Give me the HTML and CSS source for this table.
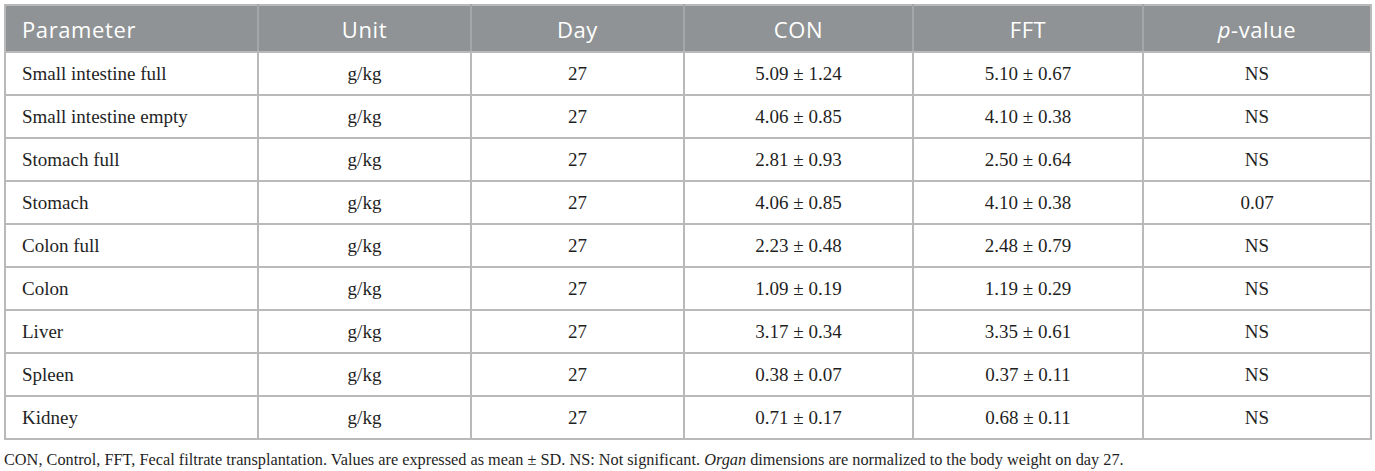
FILE: index.html
```html
<!DOCTYPE html>
<html>
<head>
<meta charset="utf-8">
<link rel="stylesheet" href="styles.css">
</head>
<body>
<div class="wrap">
<table class="data">
<colgroup>
<col class="c1"><col class="c2"><col class="c3"><col class="c4"><col class="c5"><col class="c6">
</colgroup>
<thead>
<tr><th class="left">Parameter</th><th>Unit</th><th>Day</th><th>CON</th><th>FFT</th><th><i>p</i>-value</th></tr>
</thead>
<tbody>
<tr><td class="left">Small intestine full</td><td>g/kg</td><td>27</td><td>5.09 ± 1.24</td><td>5.10 ± 0.67</td><td>NS</td></tr>
<tr><td class="left">Small intestine empty</td><td>g/kg</td><td>27</td><td>4.06 ± 0.85</td><td>4.10 ± 0.38</td><td>NS</td></tr>
<tr><td class="left">Stomach full</td><td>g/kg</td><td>27</td><td>2.81 ± 0.93</td><td>2.50 ± 0.64</td><td>NS</td></tr>
<tr><td class="left">Stomach</td><td>g/kg</td><td>27</td><td>4.06 ± 0.85</td><td>4.10 ± 0.38</td><td>0.07</td></tr>
<tr><td class="left">Colon full</td><td>g/kg</td><td>27</td><td>2.23 ± 0.48</td><td>2.48 ± 0.79</td><td>NS</td></tr>
<tr><td class="left">Colon</td><td>g/kg</td><td>27</td><td>1.09 ± 0.19</td><td>1.19 ± 0.29</td><td>NS</td></tr>
<tr><td class="left">Liver</td><td>g/kg</td><td>27</td><td>3.17 ± 0.34</td><td>3.35 ± 0.61</td><td>NS</td></tr>
<tr><td class="left">Spleen</td><td>g/kg</td><td>27</td><td>0.38 ± 0.07</td><td>0.37 ± 0.11</td><td>NS</td></tr>
<tr><td class="left">Kidney</td><td>g/kg</td><td>27</td><td>0.71 ± 0.17</td><td>0.68 ± 0.11</td><td>NS</td></tr>
</tbody>
</table>
<p class="note">CON, Control, FFT, Fecal filtrate transplantation. Values are expressed as mean ± SD. NS: Not significant. <i>Organ</i> dimensions are normalized to the body weight on day 27.</p>
</div>
</body>
</html>
```

FILE: styles.css
```css
html, body {
  margin: 0;
  padding: 0;
  background: #ffffff;
}
.wrap {
  padding: 4px 5px 0 4px;
}
.data {
  width: 1366px;
  table-layout: fixed;
  border-collapse: collapse;
  border: 2px solid #b9b9b9;
}
.c1 { width: 253px; }
.c2 { width: 213px; }
.c3 { width: 213px; }
.c4 { width: 229px; }
.c5 { width: 230px; }
.c6 { width: 228px; }
.data th {
  background: #8f9395;
  color: #ffffff;
  font-family: "Open Sans", "Noto Sans", sans-serif;
  font-weight: 400;
  font-size: 22px;
  letter-spacing: 0.6px;
  height: 45px;
  padding: 0 16px;
  text-align: center;
  border-left: 2px solid #a3a7a9;
  border-bottom: 2px solid #b9b9b9;
  vertical-align: middle;
}
.data th:first-child { border-left: none; }
.data td {
  font-family: "Liberation Serif", "Times New Roman", serif;
  font-size: 19px;
  color: #1f1f1f;
  height: 41px;
  padding: 0 16px;
  text-align: center;
  border: 2px solid #b9b9b9;
  vertical-align: middle;
}
.data .left { text-align: left; }
.note {
  margin: 10px 0 0 0;
  font-family: "Liberation Serif", "Times New Roman", serif;
  font-size: 16.3px;
  color: #1f1f1f;
  white-space: nowrap;
}
```
